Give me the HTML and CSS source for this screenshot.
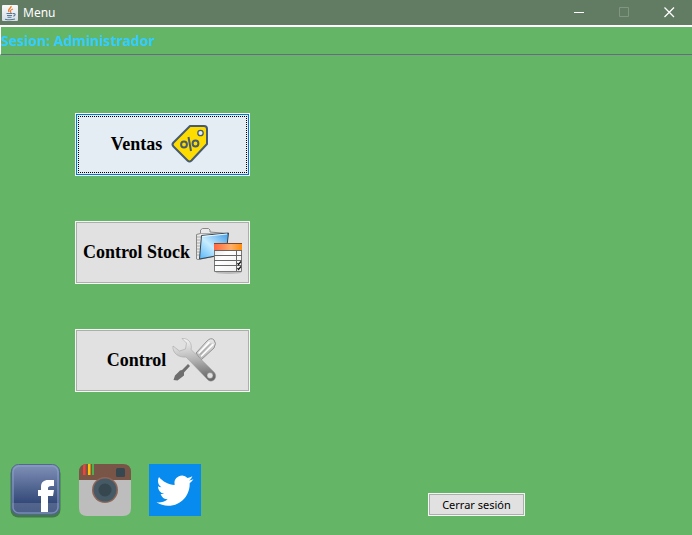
FILE: index.html
```html
<!DOCTYPE html>
<html lang="es">
<head>
<meta charset="utf-8">
<meta name="viewport" content="width=device-width, initial-scale=1">
<title>Menu</title>
<link rel="stylesheet" href="styles.css">
</head>
<body>
<header class="titlebar">
  <svg class="app-icon" viewBox="0 0 16 16" aria-hidden="true">
    <defs><linearGradient id="tile" x1="0" y1="0" x2="0" y2="1"><stop offset="0" stop-color="#f8fafb"/><stop offset="1" stop-color="#d5dde4"/></linearGradient></defs>
    <rect width="16" height="16" rx="1" fill="url(#tile)"/>
    <path d="M9 1c1 2-4 3-2 6M11 4C8 5 8 6 9 8" fill="none" stroke="#ee7d2b" stroke-width="1.3"/>
    <path d="M4.500 8.500h6M5 10.500h5M5.500 12.200h4M3 14.200c3 .7 7 .7 10-.2M11 8.600c3-.6 2.500 2 .3 2.500" fill="none" stroke="#53789b" stroke-width="1.100"/>
  </svg>
  <span class="title">Menu</span>
  <button class="window-button" type="button" aria-label="Minimizar"><svg viewBox="0 0 11 11"><path d="M0 5.500h10"/></svg></button>
  <button class="window-button" type="button" aria-label="Maximizar" disabled><svg viewBox="0 0 11 11"><path d="M.5.5h9v9h-9z"/></svg></button>
  <button class="window-button" type="button" aria-label="Cerrar"><svg viewBox="0 0 11 11"><path d="M.5.5l9.500 9.500M10 .5L.5 10" stroke-width="1.300"/></svg></button>
</header>
<div class="session">Sesion: Administrador</div>
<main class="menu">
  <button class="menu-button focused" type="button">Ventas
    <svg viewBox="0 0 48 48" aria-hidden="true">
      <path d="M24 6h14q3 0 3 3v15L25.500 40.500q-2 2-4 0L7.500 26.500q-2-2 0-4z" fill="#ffdc00" stroke="#465a70" stroke-width="2" stroke-linejoin="round"/>
      <circle cx="34.500" cy="13" r="2.700" fill="#e5edf4" stroke="#465a70" stroke-width="1.300"/>
      <g fill="none" stroke="#465a70" stroke-width="2"><circle cx="18" cy="24.500" r="2.900"/><circle cx="29.500" cy="23.500" r="2.900"/><path d="M22.500 17l2.500 14"/></g>
    </svg>
  </button>
  <button class="menu-button" type="button">Control Stock
    <svg viewBox="-1 1 48 48" aria-hidden="true">
      <defs>
        <linearGradient id="folder" x1="0" y1="1" x2="1" y2="0"><stop offset="0" stop-color="#55b5fb"/><stop offset=".45" stop-color="#c8edff"/><stop offset="1" stop-color="#3d9ae8"/></linearGradient>
        <linearGradient id="heading"><stop offset="0" stop-color="#ff6542"/><stop offset=".6" stop-color="#ffb06a"/><stop offset="1" stop-color="#ff8d08"/></linearGradient>
        <linearGradient id="paper" x1="0" y1="0" x2="1" y2="1"><stop offset="0" stop-color="#ddd"/><stop offset=".4" stop-color="#fff"/><stop offset="1" stop-color="#eee"/></linearGradient>
      </defs>
      <path d="M1.500 32V7.500l4-1V3l2-1.500h6L15 3v2l17 1.500V27L3 32.500z" fill="#e9e9e9" stroke="#888"/>
      <path d="M2 10h4M2 13h3M2 16h3M2 19h3M2 22h3M2 25h3M2 28h3M6 6.500h9l17 1" stroke="#aaa" fill="none"/>
      <path d="M6.500 8.500L33.500 6 31 27 4.500 32z" fill="url(#folder)" stroke="#37444d"/>
      <path d="M7 9.500L32 7" stroke="#e8faff" fill="none"/>
      <ellipse cx="33.500" cy="45.500" rx="13" ry="1.500" fill="#bbb"/>
      <path d="M19.500 16.500h27v28h-27z" fill="url(#paper)" stroke="#777"/>
      <path d="M19 16h28v7H19z" fill="url(#heading)"/>
      <path d="M19 16.500h28" stroke="#80492c"/>
      <path d="M19 23.500h28M19 28.500h28M19 33.500h28M19 38.500h28M41.500 23v21" stroke="#666"/>
      <path d="M42.500 36l1 1.500 2.500-3M42.500 41l1 1.500 2.500-3" fill="none" stroke="#111" stroke-width="1.200"/>
    </svg>
  </button>
  <button class="menu-button" type="button">Control
    <svg viewBox="0 0 48 48" aria-hidden="true">
      <defs>
        <linearGradient id="steel" gradientUnits="userSpaceOnUse" x1="20" y1="3" x2="25" y2="44"><stop offset="0" stop-color="#f2f2f2"/><stop offset=".5" stop-color="#b5b5b5"/><stop offset="1" stop-color="#686868"/></linearGradient>
      </defs>
      <path d="M26 17L37 5q4-4 7-1t0 8L31 24z" fill="url(#steel)" stroke="#929292"/>
      <path d="M29 17L39 6.500M31.500 20L43 8.500" stroke="#fff" stroke-width="1.500" stroke-linecap="round"/>
      <path d="M30 18.500L41 7.500" stroke="#999" stroke-width="1"/>
      <path d="M20 30l-2-2-6 6-2 .5-5 5-1.500 4.500 4 .5 6.500-5v-3z" fill="#6e6e6e"/>
      <path d="M12 2.500c7-.5 10.500 5.500 9 11L44 36c5 5-2 13-7 7L16 21C9 22 2 17 3 10l6.500 5 6-2 1-6z" fill="url(#steel)" stroke="#9b9b9b" stroke-width=".5"/>
      <circle cx="40" cy="39.500" r="3" fill="#e1e1e1" stroke="#777" stroke-width=".5"/>
    </svg>
  </button>
</main>
<footer class="bottom">
  <a class="social" href="#facebook" aria-label="Facebook">
    <svg viewBox="0 0 52 52">
      <defs><linearGradient id="fb" x1="0" y1="0" x2="0" y2="1"><stop offset="0" stop-color="#8191b8"/><stop offset=".77" stop-color="#334978"/><stop offset=".78" stop-color="#53658c"/><stop offset="1" stop-color="#4a5e88"/></linearGradient></defs>
      <rect x="1.500" y="1.500" width="50" height="52" rx="8" fill="#25482d" opacity=".55"/>
      <rect x="2.500" y=".5" width="48" height="50" rx="7" fill="url(#fb)" stroke="#52688f"/>
      <rect x="4" y="2" width="45" height="47" rx="6" fill="none" stroke="#8c9fc7" stroke-opacity=".7" stroke-width="1.500"/>
      <path d="M32 48V32h-3v-6h3v-3c0-5 3-7 7-7h6v6h-3c-2 0-3 1-3 2v2h6l-1 6h-5v16z" fill="#fff"/>
    </svg>
  </a>
  <a class="social" href="#instagram" aria-label="Instagram">
    <svg viewBox="0 0 52 52">
      <path d="M0 16h52v28q0 8-8 8H8q-8 0-8-8z" fill="#bdbdbd"/>
      <path d="M0 16V8q0-8 8-8h36q8 0 8 8v8z" fill="#795548"/>
      <path d="M4 1.500L6.500 0v11H4z" fill="#f44336"/><path d="M9 0h2.500v11H9z" fill="#ffc107"/><path d="M13 0h2v11h-2z" fill="#4caf50"/>
      <rect x="37" y="4" width="9" height="9" rx="1.500" fill="#37474f"/>
      <circle cx="26" cy="26" r="13" fill="#8d6659"/><circle cx="26" cy="26" r="11.500" fill="#455a64"/><circle cx="26" cy="26" r="6.500" fill="#37474f"/>
    </svg>
  </a>
  <a class="social" href="#twitter" aria-label="Twitter">
    <svg viewBox="0 0 52 52">
      <path d="M0 0h52v52H0z" fill="#078bee"/>
      <path transform="translate(7.500 8.200) scale(1.540)" d="M23.953 4.570a10 10 0 01-2.825.775 4.958 4.958 0 002.163-2.723c-.951.555-2.005.959-3.127 1.184a4.920 4.920 0 00-8.384 4.482C7.690 8.095 4.067 6.130 1.640 3.162a4.822 4.822 0 00-.666 2.475c0 1.710.870 3.213 2.188 4.096a4.904 4.904 0 01-2.228-.616v.060a4.923 4.923 0 003.946 4.827 4.996 4.996 0 01-2.212.085 4.936 4.936 0 004.604 3.417 9.867 9.867 0 01-6.102 2.105c-.390 0-.779-.023-1.170-.067a13.995 13.995 0 007.557 2.209c9.053 0 13.998-7.496 13.998-13.985 0-.210 0-.420-.015-.630A9.935 9.935 0 0024 4.590z" fill="#fff"/>
    </svg>
  </a>
  <button class="logout" type="button">Cerrar sesión</button>
</footer>
</body>
</html>
```
FILE: styles.css
```css
* { box-sizing: border-box; }

body {
  display: flex;
  flex-direction: column;
  min-height: 100vh;
  margin: 0;
  background: #64b565;
  font-family: "Noto Sans", sans-serif;
}

svg { display: block; }
button { font-family: inherit; }

.titlebar {
  display: flex;
  align-items: center;
  height: 25px;
  padding-left: 2px;
  background: #627b63;
  color: #fff;
}

.app-icon { width: 16px; height: 16px; }

.title {
  flex: 1;
  padding-left: 5px;
  font-size: 12px;
  line-height: 16px;
}

.window-button {
  display: grid;
  place-items: center;
  width: 45px;
  height: 25px;
  padding: 0;
  border: 0;
  background: none;
  color: #fff;
}

.window-button:disabled { color: #819582; }

.window-button svg {
  width: 11px;
  height: 11px;
  fill: none;
  stroke: currentColor;
}

.session {
  height: 30px;
  border-top: 2px solid #fff;
  border-bottom: 1px solid #696984;
  border-left: 1px solid #fff;
  color: #33ccff;
  font-size: 14px;
  font-weight: bold;
  line-height: 27px;
}

.menu {
  display: flex;
  flex: 1;
  flex-direction: column;
  align-items: flex-start;
  gap: 45px;
  padding: 58px 75px 32px;
}

.menu-button {
  display: flex;
  align-items: center;
  justify-content: center;
  gap: 4px;
  width: 175px;
  height: 63px;
  padding: 0 0 2px;
  border: 1px solid #f4f8f4;
  background: #e1e1e1;
  box-shadow: inset 0 0 0 1px #adadad;
  color: #000;
  font-family: "Liberation Serif", serif;
  font-size: 18px;
  font-weight: bold;
  line-height: 24px;
  white-space: nowrap;
}

.menu-button svg { width: 48px; height: 48px; }

.menu-button.focused {
  background: #e4ecf4;
  box-shadow: inset 0 0 0 1px #0078d7;
  outline: 1px dotted #000;
  outline-offset: -4px;
}

.bottom {
  display: flex;
  align-items: flex-end;
  gap: 18px;
  padding: 0 167px 19px 9px;
}

.social svg { width: 52px; height: 52px; overflow: visible; }

.logout {
  width: 97px;
  height: 23px;
  margin-left: auto;
  padding: 0;
  border: 1px solid #f4f8f4;
  background: #e1e1e1;
  box-shadow: inset 0 0 0 1px #adadad;
  color: #000;
  font-size: 11px;
  line-height: 16px;
}
```
